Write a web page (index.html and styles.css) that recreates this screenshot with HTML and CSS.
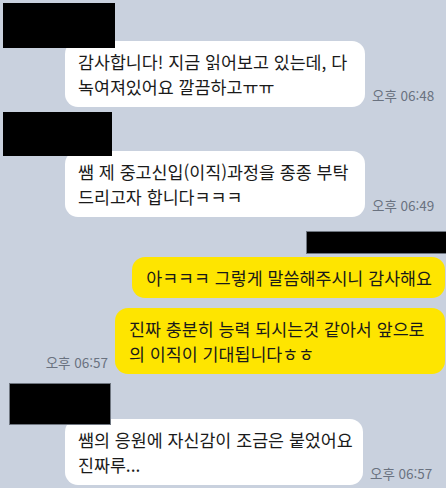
FILE: index.html
```html
<!DOCTYPE html>
<html lang="ko">
<head>
	<meta charset="UTF-8">
	<title>채팅</title>
	<link rel="stylesheet" href="styles.css">
</head>
<body>

<div class="chat">
	<!-- 받은 메시지 1 -->
	<div class="group left">
		<div class="name-mask m1"></div>
		<div class="row">
			<div class="bubble white w300">감사합니다! 지금 읽어보고 있는데, 다<br>녹여져있어요 깔끔하고ㅠㅠ</div>
			<span class="time">오후 06:48</span>
		</div>
	</div>

	<!-- 받은 메시지 2 -->
	<div class="group left g2">
		<div class="name-mask m2"></div>
		<div class="row">
			<div class="bubble white w300">쌤 제 중고신입(이직)과정을 종종 부탁<br>드리고자 합니다ㅋㅋㅋ</div>
			<span class="time">오후 06:49</span>
		</div>
	</div>

	<!-- 보낸 메시지 -->
	<div class="group right g3">
		<div class="name-mask m3"></div>
		<div class="row">
			<div class="bubble yellow">아ㅋㅋㅋ 그렇게 말씀해주시니 감사해요</div>
		</div>
		<div class="row r2">
			<span class="time">오후 06:57</span>
			<div class="bubble yellow w330">진짜 충분히 능력 되시는것 같아서 앞으로<br>의 이직이 기대됩니다ㅎㅎ</div>
		</div>
	</div>

	<!-- 받은 메시지 3 -->
	<div class="group left g4">
		<div class="name-mask m4"></div>
		<div class="row">
			<div class="bubble white w298">쌤의 응원에 자신감이 조금은 붙었어요<br>진짜루...</div>
			<span class="time">오후 06:57</span>
		</div>
	</div>
</div>

</body>
</html>
```

FILE: styles.css
```css
*{margin: 0;padding: 0;box-sizing: border-box;}
html,body{
	width: 100%;
	height: 100%;
	overflow: hidden;
}
body{
	background-color: #c9d1de;
	font-family: "Noto Sans CJK KR", "Noto Sans", sans-serif;
	color: #1a1a1a;
}
.chat{
	display: flex;
	flex-direction: column;
	padding-top: 3px;
}

/*이름 가림*/
.name-mask{
	position: relative;
	z-index: 2;
	background-color: #000;
}
.m1{ width: 112px; height: 45px; margin-left: 3px; }
.m2{ width: 109px; height: 44px; margin-left: 3px; }
.m3{ width: 141px; height: 23px; margin-left: auto; margin-right: -1px; border: 1px solid #6f7680; }
.m4{ width: 102px; height: 42px; margin-left: 9px; border: 1px solid #6f7680; }

.group{
	display: flex;
	flex-direction: column;
}
.group.right{
	align-items: flex-end;
}
.g2{ margin-top: 5px; }
.g3{ margin-top: 14px; }
.g4{ margin-top: 9px; }

.row{
	display: flex;
	align-items: flex-end;
	gap: 7px;
}
.left .row{
	padding-left: 65px;
	margin-top: -7px;
}
.g2 .row{ margin-top: -5px; }
.g4 .row{ margin-top: -6px; }
.right .row{
	margin-right: 1px;
	margin-top: 3px;
}
.right .r2{ margin-top: 10px; }

/*말풍선*/
.bubble{
	font-size: 17.35px;
	line-height: 25px;
	padding: 8px 13px 8px 13px;
	border-radius: 13px;
	white-space: nowrap;
}
.bubble.white{ background-color: #fff; }
.bubble.yellow{ background-color: #fee500; padding-left: 14px; }
.w300{ width: 300px; }
.w298{ width: 298px; }
.w330{ width: 330px; }

.time{
	font-size: 13.5px;
	line-height: 16px;
	color: #6a7280;
	padding-bottom: 4px;
	white-space: nowrap;
}
```
